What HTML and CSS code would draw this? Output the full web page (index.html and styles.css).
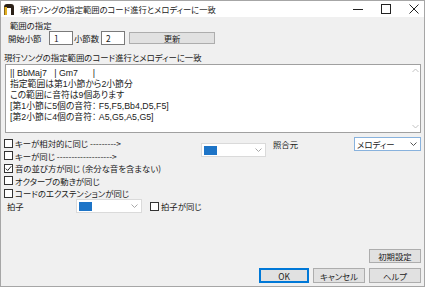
FILE: index.html
```html
<!DOCTYPE html>
<html lang="ja">
<head>
<meta charset="utf-8">
<link rel="stylesheet" href="styles.css">
</head>
<body>
<div class="window">
  <div class="titlebar">
    <svg class="app-icon" width="10" height="11" viewBox="0 0 10 11">
      <path d="M0 11 V3 Q0 0 3 0 H7 Q10 0 10 3 V11 H7 V4 H3 V11 Z" fill="#2b2118"/>
      <rect x="0.5" y="3" width="2.5" height="8" fill="#e3b021"/>
    </svg>
    <span class="title">現行ソングの指定範囲のコード進行とメロディーに一致</span>
    <div class="caption-btns">
      <svg width="10" height="10" viewBox="0 0 10 10"><line x1="0" y1="5.5" x2="10" y2="5.5" stroke="#222" stroke-width="1"/></svg>
      <svg width="10" height="10" viewBox="0 0 10 10"><rect x="0.5" y="0.5" width="9" height="9" fill="none" stroke="#222" stroke-width="1"/></svg>
      <svg width="10" height="10" viewBox="0 0 10 10"><path d="M0.5 0.5 L9.5 9.5 M9.5 0.5 L0.5 9.5" stroke="#222" stroke-width="1"/></svg>
    </div>
  </div>
  <div class="content">
    <div class="group">
      <div class="group-label">範囲の指定</div>
      <div class="range-row">
        <span class="lbl w-start">開始小節</span>
        <div class="edit">1</div>
        <span class="lbl w-count">小節数</span>
        <div class="edit">2</div>
        <div class="btn btn-update">更新</div>
      </div>
    </div>
    <div class="section-label">現行ソングの指定範囲のコード進行とメロディーに一致</div>
    <div class="textarea">
      <div class="text">
        <div class="tl">|| BbMaj7&nbsp;&nbsp;&nbsp;| Gm7&nbsp;&nbsp;&nbsp;&nbsp;&nbsp;&nbsp;|</div>
        <div class="tl">指定範囲は第1小節から2小節分</div>
        <div class="tl">この範囲に音符は9個あります</div>
        <div class="tl">[第1小節に5個の音符： F5,F5,Bb4,D5,F5]</div>
        <div class="tl">[第2小節に4個の音符： A5,G5,A5,G5]</div>
      </div>
      <div class="vscroll">
        <svg width="7" height="5" viewBox="0 0 7 5"><polyline points="0.5,4 3.5,1 6.5,4" fill="none" stroke="#c2c2c2"/></svg>
        <svg width="7" height="5" viewBox="0 0 7 5"><polyline points="0.5,1 3.5,4 6.5,1" fill="none" stroke="#c2c2c2"/></svg>
      </div>
    </div>
    <div class="lower">
      <div class="checks">
        <div class="chk-row"><span class="box"></span><span>キーが相対的に同じ ---------&gt;</span></div>
        <div class="chk-row"><span class="box"></span><span>キーが同じ -------------------&gt;</span></div>
        <div class="chk-row"><span class="box checked"><svg width="7" height="7" viewBox="0 0 7 7"><polyline points="0.8,3.6 2.7,5.5 6.3,1.2" fill="none" stroke="#222" stroke-width="1"/></svg></span><span>音の並び方が同じ (余分な音を含まない)</span></div>
        <div class="chk-row"><span class="box"></span><span>オクターブの動きが同じ</span></div>
        <div class="chk-row"><span class="box"></span><span>コードのエクステンションが同じ</span></div>
      </div>
      <div class="combo combo-key">
        <span class="swatch"></span>
        <svg class="chev" width="7" height="4" viewBox="0 0 7 4"><polyline points="0.5,0.5 3.5,3.5 6.5,0.5" fill="none" stroke="#a8a8a8"/></svg>
      </div>
      <span class="lbl ref-label">照合元</span>
      <div class="combo combo-ref">
        <span class="combo-text">メロディー</span>
        <svg class="chev" width="7" height="4" viewBox="0 0 7 4"><polyline points="0.5,0.5 3.5,3.5 6.5,0.5" fill="none" stroke="#555"/></svg>
      </div>
    </div>
    <div class="beat-row">
      <span class="lbl beat-label">拍子</span>
      <div class="combo combo-beat">
        <span class="swatch"></span>
        <svg class="chev" width="7" height="4" viewBox="0 0 7 4"><polyline points="0.5,0.5 3.5,3.5 6.5,0.5" fill="none" stroke="#a8a8a8"/></svg>
      </div>
      <div class="chk-row beat-chk"><span class="box"></span><span>拍子が同じ</span></div>
    </div>
    <div class="buttons">
      <div class="btn-line"><div class="btn btn-std">初期設定</div></div>
      <div class="btn-line">
        <div class="btn btn-std btn-ok">OK</div>
        <div class="btn btn-std">キャンセル</div>
        <div class="btn btn-std">ヘルプ</div>
      </div>
    </div>
  </div>
</div>
</body>
</html>
```

FILE: styles.css
```css
* { box-sizing: border-box; }
html, body { margin: 0; padding: 0; background: #ffffff; }
body {
  width: 425px;
  height: 288px;
  font-family: "Noto Sans CJK JP", "Noto Sans", sans-serif;
  font-size: 8.4px;
  font-feature-settings: "palt";
  color: #1a1a1a;
  line-height: 10px;
}
.window {
  width: 425px;
  height: 287px;
  border: 1px solid #a6a6a6;
  display: flex;
  flex-direction: column;
  background: #f0f0f0;
}
.titlebar {
  height: 16px;
  background: #ffffff;
  display: flex;
  align-items: center;
  padding-left: 3px;
  flex: none;
}
.app-icon { flex: none; margin-top: 1px; }
.title { margin-left: 6px; font-size: 8.3px; color: #222; }
.caption-btns {
  margin-left: auto;
  display: flex;
  gap: 18px;
  padding-right: 5px;
  align-items: center;
}
.content {
  flex: 1;
  display: flex;
  flex-direction: column;
  padding: 0 2px 3px 2px;
}
.group { padding-left: 5px; }
.group-label { margin-top: 3px; height: 10px; padding-left: 2px; }
.range-row {
  margin-top: 1px;
  display: flex;
  align-items: center;
  height: 14px;
}
.lbl { white-space: nowrap; }
.w-start { width: 41px; }
.w-count { width: 27px; margin-left: 1px; }
.edit {
  width: 24px;
  height: 14px;
  background: #fff;
  border: 1px solid #7a7a7a;
  padding-left: 4px;
  line-height: 12px;
}
.btn {
  background: #e1e1e1;
  border: 1px solid #adadad;
  display: flex;
  align-items: center;
  justify-content: center;
}
.btn-update { width: 86px; height: 12px; margin-left: 4px; }
.section-label { margin-top: 7px; height: 10px; padding-left: 1px; }
.textarea {
  margin: 2px 1px 0 2px;
  height: 69px;
  background: #fff;
  border: 1px solid #a0a0a0;
  display: flex;
}
.text {
  flex: 1;
  padding: 3px 0 0 4px;
  font-family: "Liberation Sans", "Noto Sans CJK JP", sans-serif;
  font-size: 8.8px;
  color: #222;
}
.tl { height: 11px; line-height: 11px; white-space: nowrap; }
.vscroll {
  width: 10px;
  display: flex;
  flex-direction: column;
  justify-content: space-between;
  align-items: center;
  padding: 3px 0 3px;
}
.lower {
  margin-top: 4px;
  display: flex;
  align-items: flex-start;
  height: 62px;
}
.checks { width: 198px; padding-left: 1px; }
.chk-row {
  height: 12.5px;
  display: flex;
  align-items: center;
  white-space: nowrap;
}
.box {
  width: 9px;
  height: 9px;
  border: 1px solid #333;
  background: #fff;
  margin-right: 2px;
  flex: none;
  display: flex;
  align-items: center;
  justify-content: center;
}
.combo {
  background: #fff;
  border: 1px solid #dadada;
  display: flex;
  align-items: center;
  position: relative;
}
.chev { margin-left: auto; margin-right: 3px; }
.swatch {
  width: 13px;
  height: 9px;
  background: #1d74c7;
  margin-left: 2px;
}
.combo-key { width: 65px; height: 14px; margin-top: 6px; }
.ref-label { margin-left: 7px; margin-top: 2px; }
.combo-ref {
  width: 67px;
  height: 14px;
  margin-left: auto;
  margin-right: 1px;
  border-color: #88b2dd;
}
.combo-text { padding-left: 2px; }
.beat-row {
  display: flex;
  align-items: center;
  height: 14px;
  margin-top: 0;
}
.beat-label { width: 73px; padding-left: 4px; }
.combo-beat { width: 66px; height: 14px; }
.beat-chk { margin-left: 8px; }
.buttons {
  margin-top: auto;
  display: flex;
  flex-direction: column;
  align-items: flex-end;
  gap: 5px;
  padding-right: 1px;
}
.btn-line { display: flex; gap: 4px; }
.btn-std { width: 52px; height: 15px; }
.btn-line:first-child .btn-std { height: 14px; }
.btn-ok { width: 50px; border-color: #0078d7; box-shadow: inset 0 0 0 1px #0078d7; }
```
